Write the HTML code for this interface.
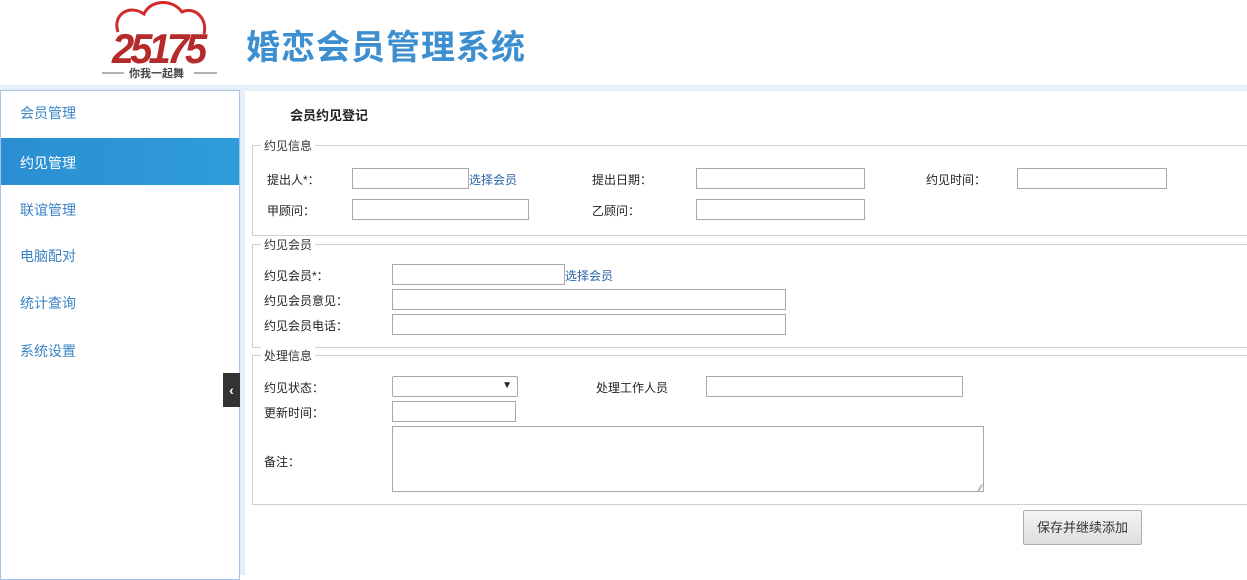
<!DOCTYPE html>
<html><head><meta charset="utf-8"><style>
*{margin:0;padding:0;box-sizing:border-box}
body{width:1247px;height:569px;overflow:hidden;background:#fff;font-family:"Liberation Sans","Noto Sans CJK SC",sans-serif;font-size:12px;color:#222;position:relative}
.a{position:absolute;white-space:nowrap}
.in{position:absolute;border:1px solid #a9a9a9;background:#fff;height:21px}
.fs{position:absolute;left:252px;right:-5px;border:1px solid #d0d0d0}
.lg{position:absolute;left:8px;top:-9px;background:#fff;padding:0 3px;font-size:12px;color:#333}
.nav{position:absolute;left:20px;font-size:14px;color:#3a84c4}
.lk{color:#2a63a8}
</style></head><body>
<div class="a" style="left:0;top:85px;width:1247px;height:6px;background:#e6eef8"></div>
<div class="a" style="left:240px;top:85px;width:5px;height:490px;background:#e6eef8"></div>
<!-- logo -->
<svg class="a" style="left:100px;top:0" width="120" height="82" viewBox="0 0 120 82">
<path d="M18 32 C12 14 30 4 44 14 C50 0 72 -2 82 12 C94 6 108 18 104 34" fill="none" stroke="#d22b2b" stroke-width="3"/>
<text x="12" y="60" font-family="Liberation Sans,sans-serif" font-style="italic" font-weight="bold" font-size="40" fill="#b52a2a" letter-spacing="-4" transform="scale(1,1.05)">25175</text>
<line x1="2" y1="73" x2="24" y2="73" stroke="#666" stroke-width="1"/>
<line x1="94" y1="73" x2="117" y2="73" stroke="#666" stroke-width="1"/>
<text x="29" y="77" font-size="11" fill="#444" font-family="Noto Sans CJK SC,sans-serif" font-weight="bold">你我一起舞</text>
</svg>
<div class="a" style="left:246px;top:20px;font-size:34px;font-weight:bold;color:#3d8fd0;letter-spacing:1px">婚恋会员管理系统</div>
<!-- sidebar -->
<div class="a" style="left:0;top:90px;width:240px;height:490px;border:1px solid #a9c3e8"></div>
<div class="a" style="left:1px;top:138px;width:238px;height:47px;background:linear-gradient(90deg,#2a8fd2,#2f9cdc)"></div>
<div class="nav" style="top:103px">会员管理</div>
<div class="nav" style="top:153px;color:#fff">约见管理</div>
<div class="nav" style="top:200px">联谊管理</div>
<div class="nav" style="top:246px">电脑配对</div>
<div class="nav" style="top:293px">统计查询</div>
<div class="nav" style="top:341px">系统设置</div>
<div class="a" style="left:223px;top:373px;width:17px;height:34px;background:#333;color:#fff;font-size:14px;font-weight:bold;text-align:center;line-height:34px">‹</div>
<!-- content -->
<div class="a" style="left:290px;top:105px;font-size:13px;font-weight:bold">会员约见登记</div>
<div class="fs" style="top:145px;height:91px"><span class="lg">约见信息</span></div>
<div class="fs" style="top:244px;height:104px"><span class="lg">约见会员</span></div>
<div class="fs" style="top:355px;height:150px"><span class="lg">处理信息</span></div>

<div class="a" style="left:267px;top:171px">提出人*：</div>
<div class="in" style="left:352px;top:168px;width:117px"></div>
<div class="a lk" style="left:469px;top:171px">选择会员</div>
<div class="a" style="left:592px;top:171px">提出日期：</div>
<div class="in" style="left:696px;top:168px;width:169px"></div>
<div class="a" style="left:926px;top:171px">约见时间：</div>
<div class="in" style="left:1017px;top:168px;width:150px"></div>
<div class="a" style="left:267px;top:202px">甲顾问：</div>
<div class="in" style="left:352px;top:199px;width:177px"></div>
<div class="a" style="left:592px;top:202px">乙顾问：</div>
<div class="in" style="left:696px;top:199px;width:169px"></div>

<div class="a" style="left:264px;top:267px">约见会员*：</div>
<div class="in" style="left:392px;top:264px;width:173px"></div>
<div class="a lk" style="left:565px;top:267px">选择会员</div>
<div class="a" style="left:264px;top:292px">约见会员意见：</div>
<div class="in" style="left:392px;top:289px;width:394px"></div>
<div class="a" style="left:264px;top:317px">约见会员电话：</div>
<div class="in" style="left:392px;top:314px;width:394px"></div>

<div class="a" style="left:264px;top:379px">约见状态：</div>
<div class="in" style="left:392px;top:376px;width:126px;border-radius:2px"><span class="a" style="right:5px;top:3px;font-size:10px">▼</span></div>
<div class="a" style="left:596px;top:379px">处理工作人员</div>
<div class="in" style="left:706px;top:376px;width:257px"></div>
<div class="a" style="left:264px;top:404px">更新时间：</div>
<div class="in" style="left:392px;top:401px;width:124px"></div>
<div class="a" style="left:264px;top:453px">备注：</div>
<div class="in" style="left:392px;top:426px;width:592px;height:66px"><span class="a" style="right:1px;bottom:-2px;font-size:9px;color:#888">⁄⁄</span></div>

<div class="a" style="left:1023px;top:510px;width:119px;height:35px;border:1px solid #adadad;border-radius:2px;background:linear-gradient(#f4f4f4,#dedede);font-size:13px;color:#333;text-align:center;line-height:33px">保存并继续添加</div>
</body></html>
